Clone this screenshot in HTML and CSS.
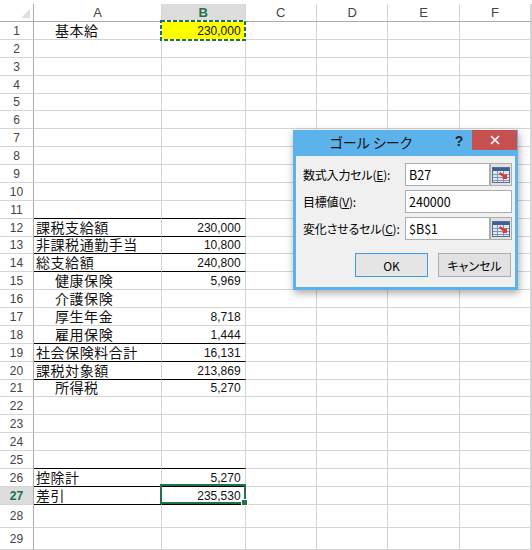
FILE: index.html
```html
<!DOCTYPE html>
<html lang="ja">
<head>
<meta charset="utf-8">
<link rel="stylesheet" href="styles.css">
</head>
<body>
<div class="sheet">
  <div class="row hd">
    <div class="rh corner"><span class="tri"></span></div>
    <div>A</div><div class="sel">B</div><div>C</div><div>D</div><div>E</div><div>F</div><div></div>
  </div>
  <div class="row"><div class="rh">1</div><div class="c ind">基本給</div><div class="c num fill">230,000</div><div></div><div></div><div></div><div></div><div></div></div>
  <div class="row"><div class="rh">2</div><div></div><div></div><div></div><div></div><div></div><div></div><div></div></div>
  <div class="row"><div class="rh">3</div><div></div><div></div><div></div><div></div><div></div><div></div><div></div></div>
  <div class="row"><div class="rh">4</div><div></div><div></div><div></div><div></div><div></div><div></div><div></div></div>
  <div class="row"><div class="rh">5</div><div></div><div></div><div></div><div></div><div></div><div></div><div></div></div>
  <div class="row"><div class="rh">6</div><div></div><div></div><div></div><div></div><div></div><div></div><div></div></div>
  <div class="row"><div class="rh">7</div><div></div><div></div><div></div><div></div><div></div><div></div><div></div></div>
  <div class="row"><div class="rh">8</div><div></div><div></div><div></div><div></div><div></div><div></div><div></div></div>
  <div class="row"><div class="rh">9</div><div></div><div></div><div></div><div></div><div></div><div></div><div></div></div>
  <div class="row"><div class="rh">10</div><div></div><div></div><div></div><div></div><div></div><div></div><div></div></div>
  <div class="row"><div class="rh">11</div><div class="bb"></div><div class="bb"></div><div></div><div></div><div></div><div></div><div></div></div>
  <div class="row"><div class="rh">12</div><div class="c bb">課税支給額</div><div class="c num bb">230,000</div><div></div><div></div><div></div><div></div><div></div></div>
  <div class="row"><div class="rh">13</div><div class="c bb">非課税通勤手当</div><div class="c num bb">10,800</div><div></div><div></div><div></div><div></div><div></div></div>
  <div class="row"><div class="rh">14</div><div class="c bb">総支給額</div><div class="c num bb">240,800</div><div></div><div></div><div></div><div></div><div></div></div>
  <div class="row"><div class="rh">15</div><div class="c ind">健康保険</div><div class="c num">5,969</div><div></div><div></div><div></div><div></div><div></div></div>
  <div class="row"><div class="rh">16</div><div class="c ind">介護保険</div><div></div><div></div><div></div><div></div><div></div><div></div></div>
  <div class="row"><div class="rh">17</div><div class="c ind">厚生年金</div><div class="c num">8,718</div><div></div><div></div><div></div><div></div><div></div></div>
  <div class="row"><div class="rh">18</div><div class="c ind bb">雇用保険</div><div class="c num bb">1,444</div><div></div><div></div><div></div><div></div><div></div></div>
  <div class="row"><div class="rh">19</div><div class="c bb">社会保険料合計</div><div class="c num bb">16,131</div><div></div><div></div><div></div><div></div><div></div></div>
  <div class="row"><div class="rh">20</div><div class="c bb">課税対象額</div><div class="c num bb">213,869</div><div></div><div></div><div></div><div></div><div></div></div>
  <div class="row"><div class="rh">21</div><div class="c ind">所得税</div><div class="c num">5,270</div><div></div><div></div><div></div><div></div><div></div></div>
  <div class="row"><div class="rh">22</div><div></div><div></div><div></div><div></div><div></div><div></div><div></div></div>
  <div class="row"><div class="rh">23</div><div></div><div></div><div></div><div></div><div></div><div></div><div></div></div>
  <div class="row"><div class="rh">24</div><div></div><div></div><div></div><div></div><div></div><div></div><div></div></div>
  <div class="row"><div class="rh">25</div><div class="bb"></div><div class="bb"></div><div></div><div></div><div></div><div></div><div></div></div>
  <div class="row"><div class="rh">26</div><div class="c bb">控除計</div><div class="c num bb">5,270</div><div></div><div></div><div></div><div></div><div></div></div>
  <div class="row"><div class="rh sel">27</div><div class="c bb">差引</div><div class="c num bb">235,530</div><div></div><div></div><div></div><div></div><div></div></div>
  <div class="row tall"><div class="rh">28</div><div></div><div></div><div></div><div></div><div></div><div></div><div></div></div>
  <div class="row tall2"><div class="rh">29</div><div></div><div></div><div></div><div></div><div></div><div></div><div></div></div>

  <svg class="ants" width="86" height="21" viewBox="0 0 86 21">
    <rect x="1" y="1" width="84" height="19" fill="none" stroke="#ffffff" stroke-width="2"/>
    <rect x="1" y="1" width="84" height="19" fill="none" stroke="#217346" stroke-width="2" stroke-dasharray="4 2"/>
  </svg>
  <div class="active"></div>
  <div class="handle"></div>

  <div class="dialog">
    <div class="titlebar">
      <div class="title">ゴール シーク</div>
      <div class="help">?</div>
      <div class="close">
        <svg width="10" height="10" viewBox="0 0 10 10"><path d="M1 1L9 9M9 1L1 9" stroke="#fff" stroke-width="1.7"/></svg>
      </div>
    </div>
    <div class="dbody">
      <div class="frow">
        <label>数式入力セル(<u>E</u>):</label>
        <div class="field"><span class="inp">B27</span><span class="rbtn"><svg width="18" height="16" viewBox="0 0 18 16"><rect x="0.5" y="0.5" width="17" height="15" fill="#dfe8f5" stroke="#5a6f8f"/><rect x="1" y="1" width="16" height="3" fill="#3b5f9a"/><path d="M1 7.5H17M1 10.5H17M1 13.5H17M5.5 4V15M11.5 4V15" stroke="#7f95b8" stroke-width="1"/><path d="M8 5L13 8L15 7L15 12L10 12L11.5 10.5L7 7Z" fill="#e03a2e"/></svg></span></div>
      </div>
      <div class="frow">
        <label>目標値(<u>V</u>):</label>
        <div class="field"><span class="inp">240000</span></div>
      </div>
      <div class="frow">
        <label>変化させるセル(<u>C</u>):</label>
        <div class="field"><span class="inp">$B$1</span><span class="rbtn"><svg width="18" height="16" viewBox="0 0 18 16"><rect x="0.5" y="0.5" width="17" height="15" fill="#dfe8f5" stroke="#5a6f8f"/><rect x="1" y="1" width="16" height="3" fill="#3b5f9a"/><path d="M1 7.5H17M1 10.5H17M1 13.5H17M5.5 4V15M11.5 4V15" stroke="#7f95b8" stroke-width="1"/><path d="M8 5L13 8L15 7L15 12L10 12L11.5 10.5L7 7Z" fill="#e03a2e"/></svg></span></div>
      </div>
      <div class="btns">
        <button class="btn ok">OK</button>
        <button class="btn">キャンセル</button>
      </div>
    </div>
  </div>
</div>
</body>
</html>
```
FILE: styles.css
```css
html, body {
  margin: 0;
  background: #ffffff;
}
body {
  font-family: "Noto Sans CJK JP", sans-serif;
}
.sheet {
  position: relative;
  width: 532px;
  height: 550px;
  overflow: hidden;
  padding-top: 4px;
  box-sizing: border-box;
}
.row {
  display: grid;
  grid-template-columns: 34px 128px 83.6px repeat(4, 71.4px) 1fr;
  height: 17.875px;
}
.row.hd { height: 18px; }
.row.tall { height: 23.5px; }
.row.tall2 { height: 22px; }
.row > div {
  box-sizing: border-box;
  border-right: 1px solid #d4d4d4;
  border-bottom: 1px solid #d4d4d4;
  white-space: nowrap;
  display: flex;
  align-items: flex-end;
  min-width: 0;
}
.hd > div {
  border-bottom-color: #ababab;
  justify-content: center;
  align-items: center;
  font: 13px "Liberation Sans", sans-serif;
  color: #444;
}
.row > .rh {
  border-right-color: #ababab;
  justify-content: center;
  align-items: center;
  font: 12px/14px "Liberation Sans", sans-serif;
  color: #444;
  padding-top: 1px;
}
.hd > .corner {
  position: relative;
  border-right-color: #ababab;
}
.tri {
  position: absolute;
  right: 3px;
  bottom: 3px;
  width: 0;
  height: 0;
  border-left: 9px solid transparent;
  border-bottom: 9px solid #dedede;
}
.row > .sel {
  background: #dcdcdc;
  color: #217346;
  font-weight: bold;
}
.c {
  font-size: 14px;
  line-height: 15px;
  letter-spacing: 0.55px;
  padding: 0 0 1px 2px;
  color: #111;
}
.row > .ind { padding-left: 21px; }
.row > .num {
  justify-content: flex-end;
  font: 12px/14px "Liberation Sans", sans-serif;
  letter-spacing: 0;
  padding: 0 4px 1px 0;
}
.row > .fill { background: #ffff00; }
.row > .bb { border-bottom-color: #000; }

.ants {
  position: absolute;
  left: 160px;
  top: 20px;
}
.active {
  position: absolute;
  left: 160px;
  top: 484px;
  width: 86px;
  height: 20px;
  border: 2px solid #217346;
  box-sizing: border-box;
}
.handle {
  position: absolute;
  left: 242px;
  top: 500px;
  width: 5px;
  height: 5px;
  background: #217346;
  outline: 1px solid #ffffff;
}

/* dialog */
.dialog {
  position: absolute;
  left: 293px;
  top: 130px;
  width: 225px;
  height: 160px;
  box-sizing: border-box;
  background: #5cb2ea;
  padding: 0 3px 3px;
  display: flex;
  flex-direction: column;
  box-shadow: 1px 3px 8px rgba(0, 0, 0, 0.35);
}
.titlebar {
  height: 26px;
  display: flex;
  align-items: flex-start;
}
.title {
  flex: 1;
  text-align: center;
  font-size: 14px;
  line-height: 24px;
  color: #111;
  padding-right: 4px;
  font-feature-settings: "palt";
}
.help {
  width: 18px;
  margin-right: 4px;
  text-align: center;
  font: bold 14px/22px "Liberation Sans", sans-serif;
  color: #222;
}
.close {
  width: 45px;
  height: 20px;
  margin-right: -2px;
  background: #c75050;
  display: flex;
  align-items: center;
  justify-content: center;
}
.close svg { display: block; }
.dbody {
  flex: 1;
  background: #f0f0f0;
  padding: 7px 3px 0 7px;
  display: flex;
  flex-direction: column;
  gap: 4px;
}
.frow {
  display: flex;
  align-items: center;
  height: 23px;
}
.frow label {
  width: 102px;
  font-size: 12px;
  line-height: 16px;
  color: #000;
  font-feature-settings: "palt";
  letter-spacing: -0.2px;
}
.field {
  flex: 1;
  display: flex;
  height: 23px;
}
.inp {
  flex: 1;
  box-sizing: border-box;
  background: #fff;
  border: 1px solid #abadb3;
  font-size: 12.5px;
  line-height: 21px;
  padding-left: 3px;
  color: #000;
}
.rbtn {
  width: 22px;
  box-sizing: border-box;
  background: #e1e1e1;
  border: 1px solid #adadad;
  display: flex;
  align-items: center;
  justify-content: center;
}
.rbtn svg { display: block; }
.btns {
  display: flex;
  justify-content: flex-end;
  gap: 10px;
  margin-top: 9px;
  padding-right: 1px;
}
.btn {
  width: 73px;
  height: 24px;
  box-sizing: border-box;
  background: #e1e1e1;
  border: 1px solid #adadad;
  font-family: "Noto Sans CJK JP", sans-serif;
  font-size: 12px;
  font-feature-settings: "palt";
  color: #000;
  padding: 0;
}
.btn.ok {
  border-color: #3c9ae8;
  background: #e5e5e5;
}
```
